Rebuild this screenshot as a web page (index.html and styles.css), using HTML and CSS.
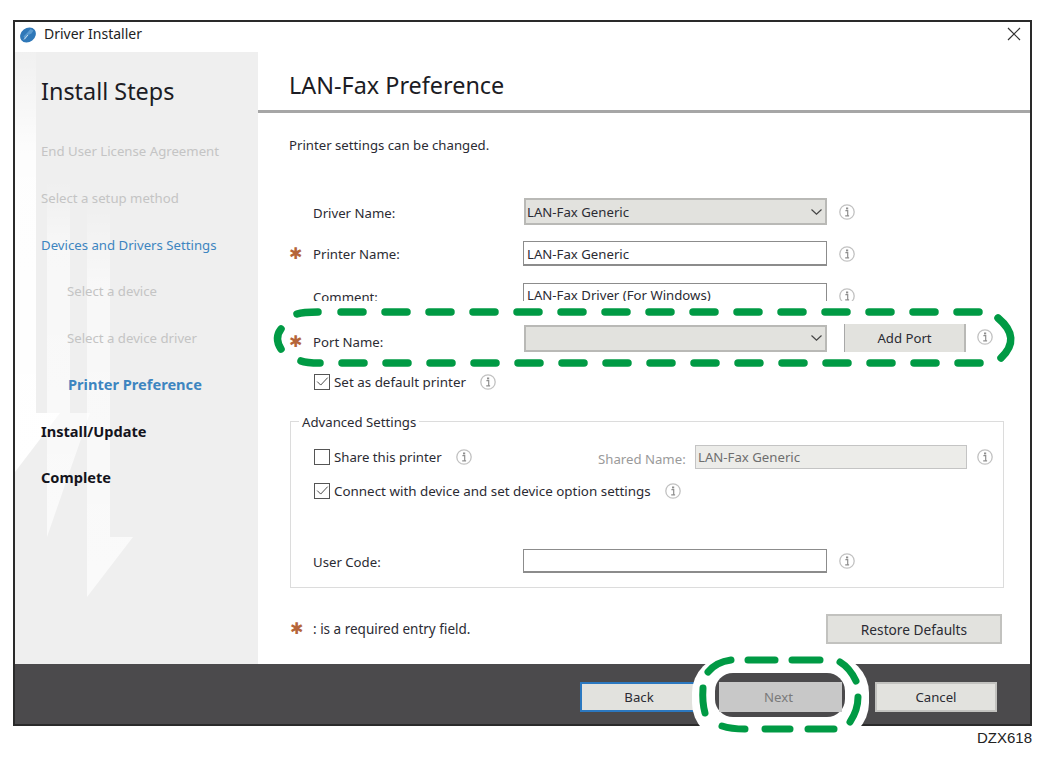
FILE: index.html
```html
<!DOCTYPE html>
<html lang="en">
<head>
<meta charset="utf-8">
<title>Driver Installer</title>
<link rel="stylesheet" href="styles.css">
</head>
<body>
<svg class="defs" width="0" height="0" aria-hidden="true">
  <defs>
    <linearGradient id="fade" x1="0" y1="0" x2="0" y2="1">
      <stop offset="0" stop-color="#fff" stop-opacity="0"/>
      <stop offset=".2" stop-color="#fff" stop-opacity=".55"/>
      <stop offset="1" stop-color="#fff" stop-opacity=".7"/>
    </linearGradient>
    <linearGradient id="fade-strong" x1="0" y1="0" x2="0" y2="1">
      <stop offset="0" stop-color="#fff" stop-opacity=".1"/>
      <stop offset=".25" stop-color="#fff" stop-opacity=".9"/>
      <stop offset="1" stop-color="#fff"/>
    </linearGradient>
  </defs>
  <symbol id="info" viewBox="0 0 16 16">
    <circle cx="8" cy="8" r="7.200" fill="#fff" stroke="#c2c2c2" stroke-width="1.300"/>
    <rect x="7" y="3.500" width="2.200" height="1.900" fill="#8f8f8f"/>
    <path d="M6.400 6.700H8.700V11.500M6.200 11.900H10.100" fill="none" stroke="#8f8f8f" stroke-width="1.200"/>
  </symbol>
  <symbol id="chev" viewBox="0 0 12 8"><path d="M1 1.500 6 6.200 11 1.500" fill="none" stroke="#444" stroke-width="1.200"/></symbol>
  <symbol id="tick" viewBox="0 0 16 16"><path d="M2.500 7.500 6.500 11.500 14.500 3" fill="none" stroke="#444" stroke-width="1.100"/></symbol>
</svg>
<div class="page">
  <div class="window">
    <header class="titlebar">
      <svg class="app-icon" viewBox="0 0 16 16" width="16" height="16"><ellipse cx="8" cy="8" rx="8.400" ry="6.900" transform="rotate(-38 8 8)" fill="#2f78b8"/><path d="M10.500 2 13.500 3.500 11.500 6.500 8 8 5 12.500 3.500 9.500 7.500 5.500Z" fill="#5b9bd0"/><path d="M4 12.500 8 8" stroke="#d5e5f3" stroke-width=".9"/></svg>
      <span class="app-title">Driver Installer</span>
      <svg class="close" viewBox="0 0 14 14" width="14" height="14"><path d="M1 1 13 13M13 1 1 13" stroke="#333" stroke-width="1.200"/></svg>
    </header>
    <div class="content">
      <aside class="sidebar">
        <svg class="arrows" viewBox="0 0 243 612" width="243" height="612" aria-hidden="true">
          <path d="M0 0H21V361H45L0 420Z" fill="url(#fade-strong)"/>
          <path d="M32 128H55V361H75L32 485Z" fill="url(#fade)"/>
          <path d="M72 148H95V485H118L72 545Z" fill="url(#fade)"/>
        </svg>
        <h2 class="steps-title">Install Steps</h2>
        <ol class="steps">
          <li class="step done">End User License Agreement</li>
          <li class="step done">Select a setup method</li>
          <li class="step active">Devices and Drivers Settings</li>
          <li class="step done sub">Select a device</li>
          <li class="step done sub">Select a device driver</li>
          <li class="step current sub">Printer Preference</li>
          <li class="step todo">Install/Update</li>
          <li class="step todo">Complete</li>
        </ol>
      </aside>
      <main class="main">
        <h1 class="main-title">LAN-Fax Preference</h1>
        <p class="desc">Printer settings can be changed.</p>
        <div class="row row-driver">
          <span class="req"></span><label class="label label-driver">Driver Name:</label>
          <div class="select"><span>LAN-Fax Generic</span><svg class="chev"><use href="#chev"/></svg></div>
          <svg class="info"><use href="#info"/></svg>
        </div>
        <div class="row row-printer">
          <span class="req">✱</span><label class="label">Printer Name:</label>
          <div class="input">LAN-Fax Generic</div>
          <svg class="info"><use href="#info"/></svg>
        </div>
        <div class="row row-comment">
          <span class="req"></span><label class="label label-comment">Comment:</label>
          <div class="input input-comment">LAN-Fax Driver (For Windows)</div>
          <svg class="info info-comment"><use href="#info"/></svg>
        </div>
        <div class="row row-port">
          <span class="req req-port">✱</span><label class="label label-port">Port Name:</label>
          <div class="select"><span></span><svg class="chev"><use href="#chev"/></svg></div>
          <button class="btn-add">Add Port</button>
          <svg class="info info-port"><use href="#info"/></svg>
        </div>
        <div class="check-row check-default">
          <span class="check"><svg><use href="#tick"/></svg></span><span>Set as default printer</span>
          <svg class="info info-inline"><use href="#info"/></svg>
        </div>
        <fieldset class="advanced">
          <legend>Advanced Settings</legend>
          <div class="share-row">
            <div class="share-left">
              <span class="check"></span><span>Share this printer</span>
              <svg class="info info-inline"><use href="#info"/></svg>
            </div>
            <span class="shared-label">Shared Name:</span>
            <div class="input input-shared">LAN-Fax Generic</div>
            <svg class="info info-shared"><use href="#info"/></svg>
          </div>
          <div class="check-row check-connect">
            <span class="check"><svg><use href="#tick"/></svg></span><span>Connect with device and set device option settings</span>
            <svg class="info info-inline"><use href="#info"/></svg>
          </div>
          <div class="row row-user">
            <label class="label label-user">User Code:</label>
            <div class="input"></div>
            <svg class="info"><use href="#info"/></svg>
          </div>
        </fieldset>
        <div class="required-row">
          <span class="req">✱</span><span class="req-text">: is a required entry field.</span>
          <button class="btn btn-restore">Restore Defaults</button>
        </div>
      </main>
    </div>
    <footer class="footer">
      <button class="btn btn-back">Back</button>
      <div class="next-wrap">
        <svg class="next-mark" viewBox="0 0 180 90" width="180" height="90" aria-hidden="true">
          <rect x="1" y="1" width="177" height="86" rx="38" fill="#fff"/>
          <rect x="24" y="19" width="130" height="44" rx="18" fill="#4b4a4c"/>
          <g class="mark-lines">
            <path d="M17 18Q25 8 40 6"/>
            <path d="M57 6H84"/>
            <path d="M101 6H129"/>
            <path d="M149 8Q159 14 165 27"/>
            <path d="M167 43Q167 56 159 68"/>
            <path d="M31 72Q40 75 54 75"/>
            <path d="M74 75H99"/>
            <path d="M117 75H143"/>
            <path d="M12 34Q11 48 14 59"/>
          </g>
        </svg>
        <button class="btn btn-next">Next</button>
      </div>
      <button class="btn btn-cancel">Cancel</button>
    </footer>
  </div>
  <svg class="port-mark" viewBox="0 0 760 70" width="760" height="70" aria-hidden="true">
    <path d="M29 9Q35 7 50 7" class="dash-solo"/>
    <path d="M73 7H711" class="dash"/>
    <path d="M33 56Q38 58 52 58" class="dash-solo"/>
    <path d="M74 58H712" class="dash"/>
    <path d="M13 24Q6 33 13 44" class="dash-solo"/>
    <path d="M730 13Q754 33 733 53" class="dash-solo"/>
  </svg>
  <div class="figure-id">DZX618</div>
</div>
</body>
</html>
```

FILE: styles.css
```css
* { box-sizing: border-box; }
html, body { margin: 0; padding: 0; background: #fff; }
body { font-family: "Noto Sans", "Open Sans", sans-serif; font-size: 13.200px; color: #2b2b33; }
.defs { position: absolute; }
.page { position: relative; width: 1044px; height: 757px; padding: 20px 0 0 13px; }

.window { width: 1019px; height: 706px; border: 2px solid #2a2a2a; display: flex; flex-direction: column; background: #fff; }
.titlebar { height: 30px; display: flex; align-items: flex-start; flex: none; padding: 2px 9px 0 5px; }
.app-icon { flex: none; margin-top: 3px; }
.app-title { margin-left: 8px; font-size: 14px; line-height: 20px; color: #222; }
.close { margin: 3px 0 0 auto; }

.content { flex: 1; display: flex; min-height: 0; }
.sidebar { position: relative; width: 243px; flex: none; background: #efefef; padding: 0 0 0 26px; overflow: hidden; }
.arrows { position: absolute; left: 0; top: 0; }
.steps-title { position: relative; margin: 22px 0 0; font-size: 23.400px; line-height: 34px; font-weight: 400; color: #1c1c24; }
.steps { position: relative; list-style: none; margin: 33px 0 0; padding: 0; }
.step { height: 46.800px; line-height: 20px; font-size: 13.200px; white-space: nowrap; }
.step.done { color: #c4c4c4; }
.step.active { color: #3d85c0; }
.step.sub { padding-left: 26px; }
.step.current { color: #3d85c0; font-weight: 700; font-size: 14.600px; padding-left: 27px; margin-top: -1px; }
.step.todo { color: #14141c; font-weight: 700; font-size: 14.600px; height: 46.300px; }

.main { flex: 1; min-width: 0; display: flex; flex-direction: column; }
.main-title { height: 61px; margin: 0; padding: 15px 0 0 31px; font-size: 23.400px; line-height: 36px; font-weight: 400; color: #1c1c24; border-bottom: 3px solid #a6a6a6; flex: none; }
.desc { margin: 22px 0 0 31px; height: 20px; line-height: 20px; }

.row { display: grid; grid-template-columns: 22px 210px 304px auto; align-items: center; margin-left: 33px; justify-content: start; }
.row-driver { height: 27px; margin-top: 43px; }
.row-printer { height: 25px; margin-top: 16px; }
.row-comment { height: 18px; margin-top: 17px; align-items: start; overflow: hidden; }
.row-port { height: 28px; margin-top: 23px; grid-template-columns: 22px 210px 304px auto auto; }
.req { color: #b5653a; font-family: "DejaVu Sans", sans-serif; font-size: 16px; line-height: 16px; width: 18px; display: block; }
.req-port { margin-top: 8px; }
.label { white-space: nowrap; }
.label-driver { margin-top: 2px; }
.label-port { margin-top: 8px; }
.label-comment { margin-top: 5px; }
.row .req { margin-left: -2px; }
.select { height: 27px; margin-left: 1px; background: #e2e2de; border: 2px solid #b9b9b6; display: flex; align-items: center; justify-content: space-between; padding: 0 2px 0 1px; }
.select span { line-height: 22px; }
.chev { width: 13px; height: 8px; }
.input { height: 25px; line-height: 24px; background: #fff; border: 1px solid #8c8c8c; border-bottom-width: 2px; padding: 0 3px; white-space: nowrap; }
.input-comment { height: 30px; line-height: 23px; }
.info { width: 16px; height: 16px; margin-left: 12px; display: block; flex: none; }
.info-comment { margin-top: 5px; }
.info-port { margin: -3px 0 0 11px; }
.info-inline { margin-left: 14px; }
.btn-add { height: 28px; width: 122px; margin-left: 17px; padding: 0; border: 0; border-left: 1px solid #a8a8a8; border-right: 2px solid #b9b9b6; background: #e2e2de; font: inherit; color: #2b2b33; }

.check-row { display: flex; align-items: center; height: 20px; }
.check-default { margin: 20px 0 0 56px; font-size: 13.400px; }
.check { width: 16px; height: 16px; border: 1px solid #555; background: #fff; margin-right: 4px; flex: none; display: block; }
.check svg { width: 14px; height: 14px; display: block; }

.advanced { height: 176px; width: 714px; margin: 20px 0 0 32px; padding: 0; border: 1px solid #dcdcdc; border-radius: 0; }
.advanced legend { margin-left: 8px; padding: 0 3px; line-height: 20px; height: 18px; }
.share-row { display: flex; align-items: center; height: 24px; margin: 15px 0 0 23px; }
.share-left { width: 284px; display: flex; align-items: center; flex: none; }
.shared-label { color: #9a9a9a; width: 97px; white-space: nowrap; flex: none; margin-top: 4px; }
.input-shared { width: 272px; height: 24px; background: #ecece9; color: #6e6e6e; border: 1px solid #c4c4c4; flex: none; line-height: 23px; padding: 0 2px; }
.info-shared { margin-left: 10px; }
.check-connect { margin: 12px 0 0 23px; font-size: 13.400px; }
.row-user { grid-template-columns: 210px 304px auto; height: 24px; margin: 48px 0 0 22px; }
.row-user .input { height: 24px; }
.label-user { margin-top: 2px; }

.required-row { display: flex; align-items: center; height: 30px; margin: 26px 0 0 32px; width: 712px; }
.req-text { margin-left: 5px; font-size: 13.500px; }
.btn { font: inherit; color: #2b2b33; background: #e2e2de; border: 2px solid #c2c2bf; padding: 0; height: 30px; }
.btn-restore { width: 176px; margin-left: auto; font-size: 13.700px; }

.footer { height: 60px; flex: none; background: #4b4a4c; display: flex; align-items: center; padding: 5px 0 0 565px; position: relative; }
.btn-back { width: 118px; border-color: #2b78c0; flex: none; }
.next-wrap { position: relative; z-index: 1; width: 123px; height: 30px; margin-left: 21px; flex: none; }
.next-mark { position: absolute; left: -28px; top: -28px; }
.mark-lines path { fill: none; stroke: #009a44; stroke-width: 7; stroke-linecap: round; }
.btn-next { position: relative; width: 123px; background: #c8c8c8; border-color: #c8c8c8; color: #7a7a7a; display: block; padding-right: 4px; }
.btn-cancel { width: 122px; margin-left: 33px; flex: none; }

.port-mark { position: absolute; left: 268px; top: 305px; overflow: visible; }
.dash, .dash-solo { fill: none; stroke: #009a44; stroke-width: 7.500; stroke-linecap: round; }
.dash { stroke-dasharray: 22 22; }

.figure-id { position: absolute; right: 12px; top: 730px; font-family: "Liberation Sans", Arial, sans-serif; font-size: 15px; line-height: 16px; color: #222; }
```
